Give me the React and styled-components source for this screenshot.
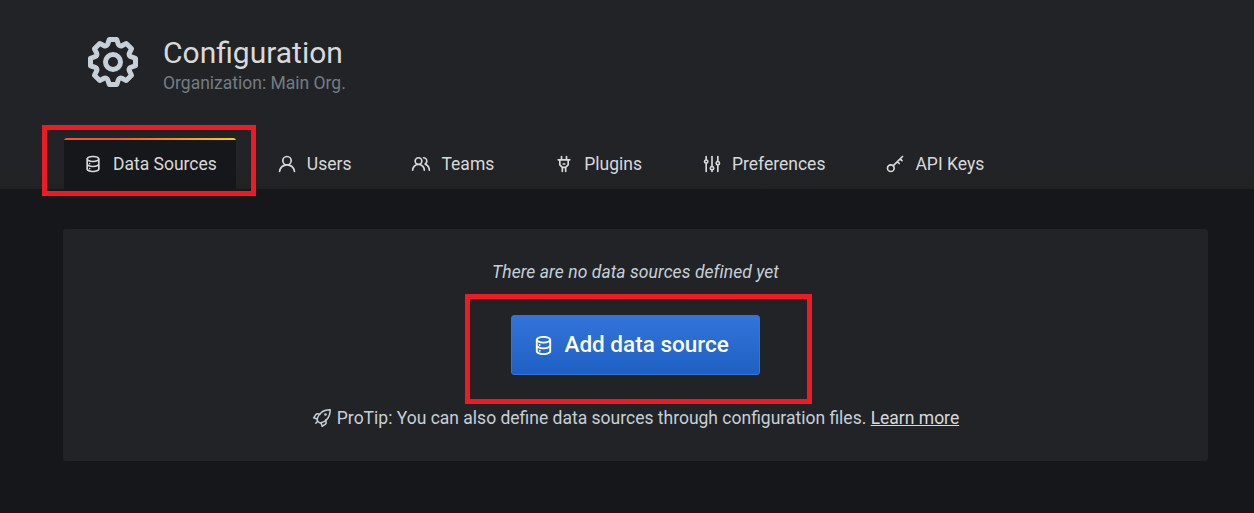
import React from "react";
import styled, { createGlobalStyle } from "styled-components";

const GlobalStyle = createGlobalStyle`
  * { box-sizing: border-box; }
  body {
    margin: 0;
    background: #15171a;
    color: #c7d0d9;
    font-family: Roboto, "Liberation Sans", sans-serif;
    font-size: 17.5px;
    line-height: 26px;
    overflow: hidden;
  }
`;

const Page = styled.div`
  position: relative;
  width: 1254px;
  height: 513px;
  background: #15171a;
`;

const Header = styled.header`
  height: 189px;
  padding: 32px 0 0 63px;
  display: flex;
  flex-direction: column;
  justify-content: space-between;
  background: linear-gradient(180deg, #222327 0%, #222327 85%, #202222 100%);
`;

const Heading = styled.div`
  display: flex;
  padding-left: 20px;
  gap: 20px;
`;

const Title = styled.h1`
  margin: 0;
  padding-top: 3px;
  font-size: 30px;
  font-weight: 400;
  line-height: 36px;
  color: #d8d9da;
`;

const Subtitle = styled.div`
  line-height: 24px;
  color: #737d83;
`;

const Tabs = styled.nav`
  display: flex;
  gap: 22px;
  padding-left: 1px;
`;

const Tab = styled.a`
  position: relative;
  display: flex;
  align-items: center;
  gap: 10px;
  height: 51px;
  padding: 0 19px;
  color: #d8d9da;
  border-radius: 3px 3px 0 0;
  overflow: hidden;
  background: ${(p) => (p.$active ? "#15171a" : "none")};

  &::before {
    content: "";
    display: ${(p) => (p.$active ? "block" : "none")};
    position: absolute;
    inset: 0 0 auto 0;
    height: 2px;
    background: linear-gradient(90deg, #f05a28 30%, #fbca0a 99%);
  }
`;

const Icon = styled.svg`
  flex: none;
  width: ${(p) => p.$size || 20}px;
  height: ${(p) => p.$size || 20}px;
  fill: currentColor;
  color: ${(p) => p.$color || "inherit"};
`;

const Card = styled.section`
  display: flex;
  flex-direction: column;
  align-items: center;
  width: 1145px;
  height: 232px;
  margin: 40px 0 0 63px;
  padding-top: 30px;
  border-radius: 3px;
  background: #222327;
`;

const EmptyText = styled.em`
  line-height: 26px;
  letter-spacing: 0.07px;
`;

const AddButton = styled.button`
  display: flex;
  align-items: center;
  gap: 10px;
  width: 249px;
  height: 60px;
  margin: 30px 0;
  padding: 0 0 2px 19.5px;
  border: 1px solid #3274d9;
  border-radius: 3px;
  background: linear-gradient(180deg, #3274d9 0%, #1f60c4 100%);
  color: #fff;
  font: 500 22.5px/30px Roboto, "Liberation Sans", sans-serif;

  svg {
    margin-top: 2px;
  }
`;

const ProTip = styled.div`
  display: flex;
  align-items: center;
  gap: 5px;
`;

const Link = styled.a`
  color: #d8d9da;
  text-decoration: underline;
`;

const Highlight = styled.div`
  position: absolute;
  left: ${(p) => p.$x}px;
  top: ${(p) => p.$y}px;
  width: ${(p) => p.$w}px;
  height: ${(p) => p.$h}px;
  border: 5px solid #ed1c24;
  pointer-events: none;
`;

const paths = {
  cog: "M21.32,9.55l-1.89-.63.89-1.78A1,1,0,0,0,20.13,6L18,3.87a1,1,0,0,0-1.15-.19l-1.78.89-.63-1.89A1,1,0,0,0,13.5,2h-3a1,1,0,0,0-.95.68L8.92,4.57,7.14,3.68A1,1,0,0,0,6,3.87L3.87,6a1,1,0,0,0-.19,1.15l.89,1.78-1.89.63A1,1,0,0,0,2,10.5v3a1,1,0,0,0,.68.95l1.89.63-.89,1.78A1,1,0,0,0,3.87,18L6,20.13a1,1,0,0,0,1.15.19l1.78-.89.63,1.89a1,1,0,0,0,.95.68h3a1,1,0,0,0,.95-.68l.63-1.89,1.78.89A1,1,0,0,0,18,20.13L20.13,18a1,1,0,0,0,.19-1.15l-.89-1.78,1.89-.63A1,1,0,0,0,22,13.5v-3A1,1,0,0,0,21.32,9.55ZM20,12.78l-1.2.4A2,2,0,0,0,17.64,16l.57,1.14-1.1,1.1L16,17.64a2,2,0,0,0-2.79,1.16l-.4,1.2H11.22l-.4-1.2A2,2,0,0,0,8,17.64l-1.14.57-1.1-1.1L6.36,16A2,2,0,0,0,5.2,13.18L4,12.78V11.22l1.2-.4A2,2,0,0,0,6.36,8L5.79,6.89l1.1-1.1L8,6.36A2,2,0,0,0,10.82,5.2l.4-1.2h1.56l.4,1.2A2,2,0,0,0,16,6.36l1.14-.57,1.1,1.1L17.64,8a2,2,0,0,0,1.16,2.79l1.2.4ZM12,8a4,4,0,1,0,4,4A4,4,0,0,0,12,8Zm0,6a2,2,0,1,1,2-2A2,2,0,0,1,12,14Z",
  database: "M8,16.5a1,1,0,1,0,1,1A1,1,0,0,0,8,16.5ZM12,2C8,2,4,3.37,4,6V18c0,2.63,4,4,8,4s8-1.37,8-4V6C20,3.37,16,2,12,2Zm6,16c0,.71-2.28,2-6,2s-6-1.29-6-2V14.73A13.16,13.16,0,0,0,12,16a13.16,13.16,0,0,0,6-1.27Zm0-6c0,.71-2.28,2-6,2s-6-1.29-6-2V8.73A13.16,13.16,0,0,0,12,10a13.16,13.16,0,0,0,6-1.27ZM12,8C8.28,8,6,6.71,6,6s2.28-2,6-2,6,1.29,6,2S15.72,8,12,8ZM8,10.5a1,1,0,1,0,1,1A1,1,0,0,0,8,10.5Z",
  user: "M15.71,12.71a6,6,0,1,0-7.42,0,10,10,0,0,0-6.22,8.18,1,1,0,0,0,2,.22,8,8,0,0,1,15.9,0,1,1,0,0,0,1,.89h.11a1,1,0,0,0,.88-1.1A10,10,0,0,0,15.71,12.71ZM12,12a4,4,0,1,1,4-4A4,4,0,0,1,12,12Z",
  users: "M12.3,12.22A4.92,4.92,0,0,0,14,8.5a5,5,0,0,0-10,0,4.92,4.92,0,0,0,1.7,3.72A8,8,0,0,0,1,19.5a1,1,0,0,0,2,0,6,6,0,0,1,12,0,1,1,0,0,0,2,0A8,8,0,0,0,12.3,12.22ZM9,11.5a3,3,0,1,1,3-3A3,3,0,0,1,9,11.5Zm9.74.32A5,5,0,0,0,15,3.5a1,1,0,0,0,0,2,3,3,0,0,1,3,3,3,3,0,0,1-1.5,2.59,1,1,0,0,0-.5.84,1,1,0,0,0,.45.86l.39.26.13.07a7,7,0,0,1,4,6.38,1,1,0,0,0,2,0A9,9,0,0,0,18.74,11.82Z",
  plug: "M19,6H16V3a1,1,0,0,0-2,0V6H10V3A1,1,0,0,0,8,3V6H5A1,1,0,0,0,5,8H6v5a1,1,0,0,0,.29.71L9,16.41V21a1,1,0,0,0,2,0V17h2v4a1,1,0,0,0,2,0V16.41l2.71-2.7A1,1,0,0,0,18,13V8h1a1,1,0,0,0,0-2Zm-3,6.59L13.59,15H10.41L8,12.59V8h8ZM11,13h2a1,1,0,0,0,0-2H11a1,1,0,0,0,0,2Z",
  sliders: "M20,8.18V3a1,1,0,0,0-2,0V8.18a3,3,0,0,0,0,5.64V21a1,1,0,0,0,2,0V13.82a3,3,0,0,0,0-5.64ZM19,12a1,1,0,1,1,1-1A1,1,0,0,1,19,12Zm-6,2.18V3a1,1,0,0,0-2,0V14.18a3,3,0,0,0,0,5.64V21a1,1,0,0,0,2,0V19.82a3,3,0,0,0,0-5.64ZM12,18a1,1,0,1,1,1-1A1,1,0,0,1,12,18ZM6,6.18V3A1,1,0,0,0,4,3V6.18a3,3,0,0,0,0,5.64V21a1,1,0,0,0,2,0V11.82A3,3,0,0,0,6,6.18ZM5,10A1,1,0,1,1,6,9,1,1,0,0,1,5,10Z",
};

const strokes = {
  fill: "none",
  stroke: "currentColor",
  strokeWidth: 2,
  strokeLinecap: "round",
  strokeLinejoin: "round",
};

const Glyph = ({ name, size, color }) => (
  <Icon viewBox="0 0 24 24" $size={size} $color={color} aria-hidden="true">
    {name === "key" && (
      <g {...strokes}>
        <circle cx="7" cy="17" r="4" />
        <path d="M10 14 L21 3 M18.2 5.8 L20.4 8 M14.8 9.2 L17 11.4" />
      </g>
    )}
    {name === "rocket" && (
      <g {...strokes} strokeWidth={1.8}>
        <path d="M6.2 13 C7.2 8.6 11.6 2.2 21.8 2.2 C21.8 12.4 15.4 16.8 11 17.8 Q9 18.2 7.4 16.6 Q5.8 15 6.2 13 Z" />
        <path d="M9.6 7.4 L6.6 7 Q5.4 6.9 4.6 7.9 L2 11.8 L6.2 13.2" />
        <path d="M16.6 14.4 L17 17.4 Q17.1 18.6 16.1 19.4 L12.2 22 L10.8 17.8" />
        <path d="M6.8 16 L4.6 18.2" />
        <circle cx="16.2" cy="7.8" r="0.7" />
      </g>
    )}
    {paths[name] && <path d={paths[name]} />}
  </Icon>
);

const tabs = [
  ["database", "Data Sources"],
  ["user", "Users"],
  ["users", "Teams"],
  ["plug", "Plugins"],
  ["sliders", "Preferences"],
  ["key", "API Keys"],
];

export default function App() {
  return (
    <Page>
      <GlobalStyle />
      <Header>
        <Heading>
          <Glyph name="cog" size={60} color="#c7d0d9" />
          <div>
            <Title>Configuration</Title>
            <Subtitle>Organization: Main Org.</Subtitle>
          </div>
        </Heading>
        <Tabs>
          {tabs.map(([icon, label], i) => (
            <Tab key={label} $active={i === 0}>
              <Glyph name={icon} />
              {label}
            </Tab>
          ))}
        </Tabs>
      </Header>
      <Card>
        <EmptyText>There are no data sources defined yet</EmptyText>
        <AddButton>
          <Glyph name="database" size={23} />
          Add data source
        </AddButton>
        <ProTip>
          <Glyph name="rocket" />
          <span>
            ProTip: You can also define data sources through configuration files.{" "}
            <Link>Learn more</Link>
          </span>
        </ProTip>
      </Card>
      <Highlight $x={42} $y={125} $w={214} $h={71} />
      <Highlight $x={465} $y={294} $w={347} $h={110} />
    </Page>
  );
}
